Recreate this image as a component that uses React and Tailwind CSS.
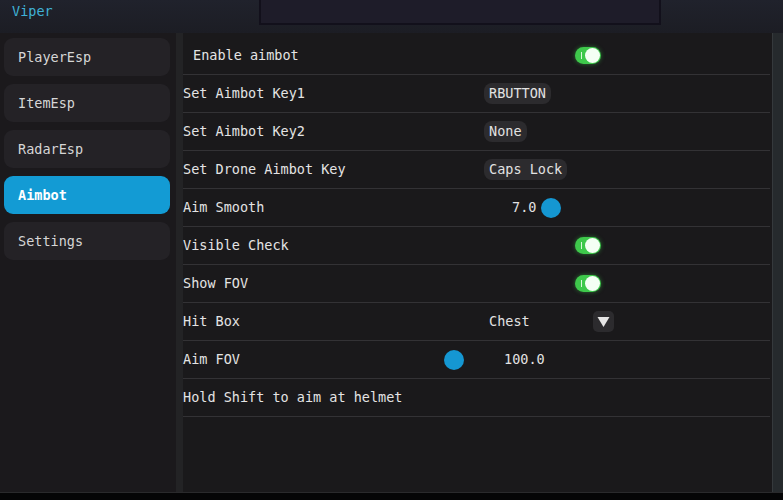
import React from "react";

const mono = { fontFamily: '"DejaVu Sans Mono", "Liberation Mono", monospace' };

function Toggle() {
  return (
    <div className="relative w-[26px] h-[17px] rounded-full bg-[#3ec84b] shadow-[0_0_4px_#3ec84b80]">
      <span className="absolute left-[6px] top-[5px] w-[1px] h-[7px] bg-[#d8f7d8]" />
      <span className="absolute right-[1px] top-[1px] w-[15px] h-[15px] rounded-full bg-[#f4fff4]" />
    </div>
  );
}

function Key({ label }) {
  return (
    <span className="ml-[40px] px-[5px] h-[21px] flex items-center rounded-[8px] bg-[#2c2b2e] text-[#e2e2e2]">
      {label}
    </span>
  );
}

function Grab() {
  return <span className="w-[20px] h-[20px] rounded-full bg-[#1597d2]" />;
}

const rows = [
  { label: "Enable aimbot", indent: true, value: <div className="ml-[131px]"><Toggle /></div> },
  { label: "Set Aimbot Key1", value: <Key label="RBUTTON" /> },
  { label: "Set Aimbot Key2", value: <Key label="None" /> },
  { label: "Set Drone Aimbot Key", value: <Key label="Caps Lock" /> },
  {
    label: "Aim Smooth",
    value: (
      <div className="flex items-center">
        <span className="ml-[68px] w-[29px] text-[#e2e2e2]">7.0</span>
        <Grab />
      </div>
    ),
  },
  { label: "Visible Check", value: <div className="ml-[131px]"><Toggle /></div> },
  { label: "Show FOV", value: <div className="ml-[131px]"><Toggle /></div> },
  {
    label: "Hit Box",
    value: (
      <div className="flex items-center">
        <span className="ml-[45px] w-[104px] text-[#e2e2e2]">Chest</span>
        <span className="w-[21px] h-[21px] rounded-[5px] bg-[#2c2b2e] flex items-center justify-center">
          <svg width="13" height="12" viewBox="0 0 13 12">
            <path d="M0.5 1 L12.5 1 L6.5 11 Z" fill="#e6e6e6" />
          </svg>
        </span>
      </div>
    ),
  },
  {
    label: "Aim FOV",
    value: (
      <div className="flex items-center">
        <Grab />
        <span className="ml-[40px] text-[#e2e2e2]">100.0</span>
      </div>
    ),
  },
  { label: "Hold Shift to aim at helmet", value: null },
];

const tabs = ["PlayerEsp", "ItemEsp", "RadarEsp", "Aimbot", "Settings"];

export default function App() {
  return (
    <div className="w-[783px] h-[500px] bg-[#0b0b0d] flex flex-col overflow-hidden text-[13.5px]" style={mono}>
      <header className="h-[33px] bg-gradient-to-b from-[#20222c] to-[#1c1d24] flex items-start shrink-0">
        <span className="ml-[12px] mt-[1px] text-[#3fb2d6]">Viper</span>
        <div className="ml-[206px] w-[402px] h-[25px] bg-[#1e1c29] border-x-2 border-b-2 border-[#12101b]" />
      </header>

      <div className="flex h-[459px] shrink-0 bg-[#141315]">
        <aside className="w-[176px] bg-[#1b191c] pt-[5px] pl-[4px] pr-[6px] flex flex-col gap-[8px]">
          {tabs.map((t) => (
            <div
              key={t}
              className={
                t === "Aimbot"
                  ? "h-[38px] rounded-[9px] bg-[#139bd4] text-white font-bold flex items-center pl-[14px]"
                  : "h-[38px] rounded-[9px] bg-[#242226] text-[#d6d6d6] flex items-center pl-[14px]"
              }
            >
              {t}
            </div>
          ))}
        </aside>
        <div className="w-[7px] bg-[#232325]" />
        <main className="flex-1 bg-[#1a191b] pt-[4px] pr-[2px]">
          {rows.map((r) => (
            <div
              key={r.label}
              className="h-[38px] grid grid-cols-[261px_1fr] items-center border-b border-[#333235]"
            >
              <span className={r.indent ? "pl-[10px] text-[#e4e4e4]" : "text-[#e4e4e4]"}>{r.label}</span>
              <div className="flex items-center">{r.value}</div>
            </div>
          ))}
        </main>
        <div className="w-[11px] bg-[#262a2d] border-l border-[#35393c]" />
      </div>

      <div className="flex-1 bg-[#050506] border-t border-[#2a2a2c]" />
    </div>
  );
}
